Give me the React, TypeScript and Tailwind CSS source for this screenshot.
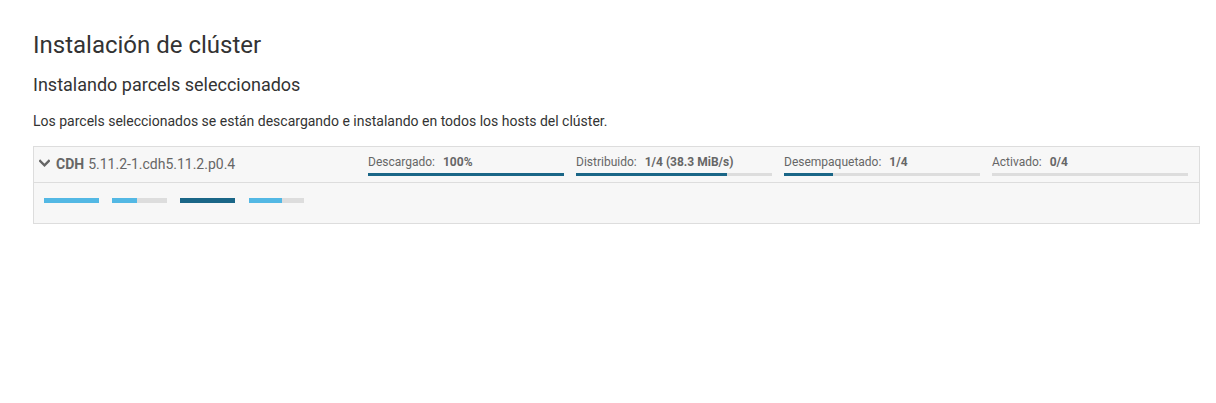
const topSteps = [
  { label: 'Descargado:', value: '100%', pct: 100 },
  { label: 'Distribuido:', value: '1/4 (38.3 MiB/s)', pct: 77 },
  { label: 'Desempaquetado:', value: '1/4', pct: 25 },
  { label: 'Activado:', value: '0/4', pct: 0 },
];

const hostBars = [
  { pct: 100, color: 'bg-[#53b8e4]', extra: '' },
  { pct: 45, color: 'bg-[#53b8e4]', extra: '' },
  { pct: 100, color: 'bg-[#1a6687]', extra: '' },
  { pct: 60, color: 'bg-[#53b8e4]', extra: 'ml-[1px]' },
];

export default function App() {
  return (
    <div className="min-h-[403px] bg-white px-[33px] pt-[30px] text-[#333]" style={{ fontFamily: 'Roboto, "Liberation Sans", sans-serif' }}>
      <h1 className="text-[24px] leading-[30px] font-normal text-[#333]">Instalación de clúster</h1>
      <h2 className="mt-[13px] text-[18px] leading-[24px] font-normal text-[#333]">Instalando parcels seleccionados</h2>
      <p className="mt-[14px] text-[14px] leading-[20px] text-[#333]">
        Los parcels seleccionados se están descargando e instalando en todos los hosts del clúster.
      </p>

      <div className="mt-[15px] w-[1167px] border border-[#dddddd] bg-[#f7f7f7]">
        {/* Header */}
        <div className="flex h-[36px] border-b border-[#dddddd] pr-[11px]">
          <div className="flex flex-1 items-center pl-[5px] text-[14px] text-[#666]">
            <svg width="11" height="9" viewBox="0 0 11 9" className="mr-[6px] mt-[-2px]">
              <path d="M1.2 2 L5.5 6.3 L9.8 2" fill="none" stroke="#666" strokeWidth="2.4" strokeLinecap="square" />
            </svg>
            <span className="font-bold">CDH</span>
            <span className="ml-[4px]">5.11.2-1.cdh5.11.2.p0.4</span>
          </div>
          <div className="flex w-[820px] gap-[12px] pt-[8px]">
            {topSteps.map((s) => (
              <div key={s.label} className="w-[196px]">
                <div className="text-[12px] leading-[14px] text-[#666]">
                  {s.label}
                  <span className="ml-[8px] font-bold">{s.value}</span>
                </div>
                <div className="mt-[4px] h-[3px] w-full bg-[#dddddd]">
                  <div className="h-full bg-[#1a6687]" style={{ width: `${s.pct}%` }} />
                </div>
              </div>
            ))}
          </div>
        </div>

        {/* Hosts */}
        <div className="flex h-[40px] gap-[13px] pl-[10px] pt-[15px]">
          {hostBars.map((b, i) => (
            <div key={i} className={`h-[5px] w-[55px] bg-[#dddddd] ${b.extra}`}>
              <div className={`h-full ${b.color}`} style={{ width: `${b.pct}%` }} />
            </div>
          ))}
        </div>
      </div>
    </div>
  );
}
